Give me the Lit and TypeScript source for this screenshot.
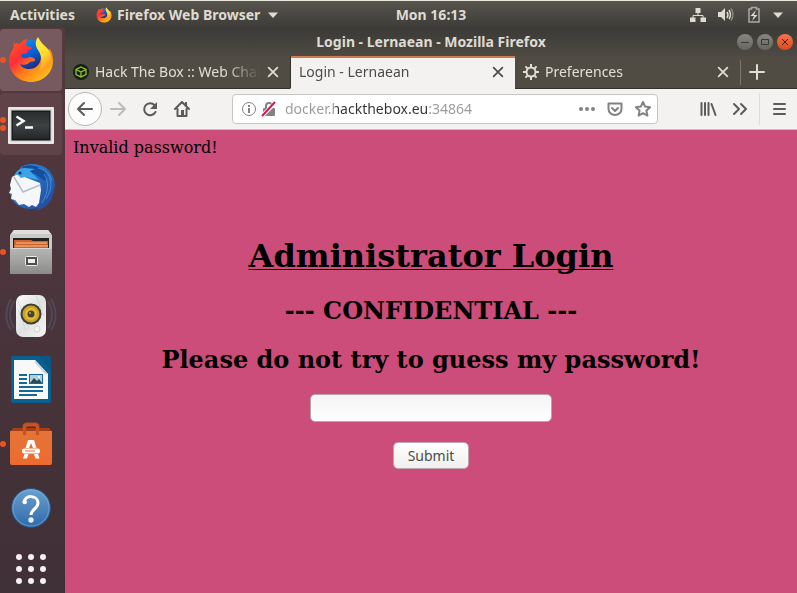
import { LitElement, html, css, svg, nothing, SVGTemplateResult } from "lit";
import { customElement, property } from "lit/decorators.js";

const firefox = (id: string) => svg`
  <defs>
    <linearGradient id="${id}-fire" x1="0.1" y1="0" x2="0.9" y2="0.9">
      <stop offset="0" stop-color="#ff5a1f"/><stop offset="0.35" stop-color="#ff2d3c"/>
      <stop offset="0.6" stop-color="#ff7a1a"/><stop offset="1" stop-color="#ffc21c"/>
    </linearGradient>
    <linearGradient id="${id}-tail" x1="0" y1="0" x2="0.4" y2="1">
      <stop offset="0" stop-color="#fff04a"/><stop offset="0.6" stop-color="#ffdc2e"/><stop offset="1" stop-color="#ff9a1f"/>
    </linearGradient>
    <linearGradient id="${id}-globe" x1="0" y1="0" x2="0.5" y2="1">
      <stop offset="0" stop-color="#0aa0ee"/><stop offset="0.5" stop-color="#0a5fd6"/><stop offset="1" stop-color="#20206e"/>
    </linearGradient>
  </defs>
  <circle cx="31" cy="28" r="17" fill="url(#${id}-globe)"/>
  <path fill="url(#${id}-fire)" d="M14 12c-1 3 0 5 0 6-3 4-5 9-5 14 0 12 10 21 22 21s22-9 22-21c0-4-1-9-3-12l-9 4c1 10-4 16-12 16-4 0-8-2-9-5 5 2 8 0 10-2 2-1 5 0 5-2 0-2-3-3-5-3-3 0-4 2-7 1-2-1-3-3-1-4 2-1 4 0 5-1 0-3 4-3 5-5-1-2-5-1-6-3 0-3 1-4 2-6-4 0-7 3-8 5-2-1-4-1-5 0-1-1-1-2-1-3z"/>
  <path fill="url(#${id}-tail)" d="M38 8c-3 4-3 9 0 13 4 6 5 14 0 22 9-1 13-8 13-15 0-9-9-11-13-20z"/>`;

const terminal = svg`
  <defs><linearGradient id="term" x1="0" y1="0" x2="0" y2="1"><stop offset="0" stop-color="#292c2d"/><stop offset="0.5" stop-color="#3d4142"/><stop offset="1" stop-color="#222525"/></linearGradient></defs>
  <rect x="8" y="14" width="46" height="37" rx="1" fill="#d8d8d6"/>
  <rect x="9" y="15" width="44" height="35" fill="none" stroke="#f6f6f5"/>
  <rect x="12" y="18" width="38" height="29" fill="url(#term)" stroke="#090a0a"/>
  <path d="M16.500 23.500l7 4.500-7 4.500" fill="none" stroke="#fff" stroke-width="2.500"/><path d="M25 34.500h8" stroke="#fff" stroke-width="2.500"/>`;

const mail = svg`
  <defs><linearGradient id="bird" x1="0" y1="0" x2="1" y2="1"><stop offset="0" stop-color="#3196df"/><stop offset="0.5" stop-color="#256bc0"/><stop offset="1" stop-color="#26418f"/></linearGradient></defs>
  <path fill="url(#bird)" d="M21 10c5-3 12-4 18-2 10 2 16 11 16 21l-3 12c-2 6-9 11-16 13l3-3c-8 2-15 1-20-2-6-3-9-9-9-15z"/>
  <path fill="#164e9e" d="M22 10c6-3 14-2 20 2 5 4 6 9 3 12l-10-7-13-2z"/>
  <path fill="#f5f7fa" d="M12 20l5-3 23 9 1 7-2 13-3 4-4-2-3 2-5-3-5 1-4-5-4-1 1-5-3-1 2-4-1-4z"/>
  <path d="M14 20l9 15 17-7" fill="none" stroke="#b6bdc7" stroke-width="1.500"/>
  <path fill="#3ea4e8" d="M14 19c2-5 6-8 11-8l10 1-5 2 9 9-14-3-4 1-3-3c-2 0-3 0-4 1z"/>
  <circle cx="20" cy="16" r="1.600" fill="#163267"/>
  <path fill="none" stroke="#4ea0e2" stroke-width="1" opacity="0.7" d="M44 17c5 8 5 17-2 29M48 17c5 9 3 17-2 25M38 11c8 2 12 6 14 13"/>`;

const files = svg`
  <defs><linearGradient id="drawer" x1="0" y1="0" x2="0" y2="1"><stop offset="0" stop-color="#b7b7b5"/><stop offset="1" stop-color="#8b8c8a"/></linearGradient></defs>
  <path fill="#c9c9c7" d="M14 9h34l4 5v37a2 2 0 0 1-2 2H12a2 2 0 0 1-2-2V14z"/>
  <path fill="#dededc" d="M14 9h34l3 4H11z"/>
  <rect x="13" y="17" width="36" height="10" fill="#222"/>
  <path fill="#ce622d" d="M14 19h17l2 1h15v7H14z"/><path stroke="#ffc18b" d="M16 22h31M15 25h33"/>
  <path fill="url(#drawer)" d="M10 27h42v24a2 2 0 0 1-2 2H12a2 2 0 0 1-2-2z"/>
  <path stroke="#d5d5d3" d="M11 27.500h40"/>
  <rect x="25.500" y="35.500" width="12" height="9" rx="1" fill="#4d4e4d" stroke="#ececea"/><rect x="28" y="38" width="7" height="4" fill="#eee"/>`;

const speaker = svg`
  <defs><linearGradient id="cabinet" x1="0" y1="0" x2="1" y2="1"><stop offset="0" stop-color="#fafafa"/><stop offset="0.5" stop-color="#dfe2e2"/><stop offset="1" stop-color="#f6f5f4"/></linearGradient></defs>
  <g fill="none" stroke="#586178" stroke-width="2" opacity="0.45"><path d="M14 16c-5 9-5 19 0 27M11 14c-6 11-6 22 0 31M48 16c5 9 5 19 0 27M51 14c6 11 6 22 0 31"/></g>
  <rect x="16" y="10" width="30" height="42" rx="7" fill="url(#cabinet)"/>
  <path d="M18 16l11 28M18 24l8 22M36 11l8 20" stroke="#c2ced0" opacity="0.6"/>
  <circle cx="31" cy="29" r="10.500" fill="#3f3d35"/><circle cx="31" cy="29" r="8.500" fill="#c9a423"/>
  <circle cx="31" cy="29" r="6" fill="#dfbc35"/><circle cx="31" cy="29" r="3.500" fill="#4b4327"/><circle cx="30" cy="28" r="1" fill="#baa46a"/>
  <circle cx="37" cy="44" r="3" fill="#f4f4f4" stroke="#d3d3d3"/>`;

const writer = svg`
  <path fill="#09608f" d="M12 7h28l11 13v32a2 2 0 0 1-2 2H13a2 2 0 0 1-2-2V9z"/>
  <path fill="#0b5684" d="M39 7h11l1 1v14z"/>
  <path fill="#f7f8f8" d="M14 11h21l13 14v25H14z"/><path fill="#cbd8df" d="M35 11v3l10 11h3z"/>
  <path stroke="#176894" stroke-width="2" d="M19 26h8M19 30h8M19 34h8M19 38h24M19 42h24M19 46h18"/>
  <rect x="29.500" y="25.500" width="13" height="9" fill="#aed0df" stroke="#176894"/><path fill="#244c57" d="M30 34l4-5 3 3 2-2 3 4z"/><circle cx="39" cy="28" r="1" fill="#fff"/>`;

const software = svg`
  <defs><linearGradient id="bag" x1="0" y1="0" x2="0" y2="1"><stop offset="0" stop-color="#e47438"/><stop offset="1" stop-color="#ee6b2f"/></linearGradient></defs>
  <path fill="#a73f16" d="M13 15h36l3 4H10z"/>
  <path fill="none" stroke="#b84a1e" stroke-width="3" d="M24 17v-3q0-3 3-3h8q3 0 3 3v3"/>
  <path fill="url(#bag)" d="M10 18h42v32a2 2 0 0 1-2 2H12a2 2 0 0 1-2-2z"/>
  <path fill="none" stroke="#c9531f" stroke-width="3" d="M24.500 22v-7q0-3 3-3h7q3 0 3 3v7"/>
  <path fill="#fff" d="M28 27h6l2.500 8h-3.500l-2-5-2 5h-3.500zM24.500 41h4l-1.500 4.500h-4zM34 41h4l1.500 4.500h-4z"/>
  <rect x="22" y="35.500" width="18" height="5" rx="2" fill="#fff"/><path stroke="#e96d32" d="M25 38h10"/>`;

const help = svg`
  <defs><linearGradient id="help" x1="0" y1="0" x2="0" y2="1"><stop offset="0" stop-color="#6ba1cf"/><stop offset="1" stop-color="#2f6aa9"/></linearGradient></defs>
  <circle cx="31" cy="31" r="19.500" fill="url(#help)" stroke="#24507f"/>
  <circle cx="31" cy="31" r="18" fill="none" stroke="#83b0d8" opacity="0.6"/>
  <path d="M24 26c0-9 14-8 14 0 0 6-7 6-7 12" fill="none" stroke="#fff" stroke-width="3"/><circle cx="24.800" cy="25" r="2.200" fill="#fff"/><circle cx="31" cy="43" r="2.700" fill="#e4edf6"/>`;

const apps = svg`<g fill="#f4f0f1">${[16, 28, 40].map((y) => [19, 31, 43].map((x) => svg`<circle cx="${x}" cy="${y}" r="3"/>`))}</g>`;

const line = (d: string, width = 2) =>
  svg`<path d="${d}" fill="none" stroke="currentColor" stroke-width="${width}" stroke-linecap="round" stroke-linejoin="round"/>`;

const glyphs: Record<string, SVGTemplateResult> = {
  back: line("M15 8H1M7 2L1 8l6 6"),
  forward: line("M1 8h14M9 2l6 6-6 6"),
  reload: svg`${line("M13.500 11A6 6 0 1 1 12.500 4")}<path fill="currentColor" d="M15 1v7H8z"/>`,
  home: svg`${line("M1 8l7-7 7 7M3.500 8v7h9V8")}<path fill="currentColor" d="M7 9h3v6H7zM11 1h2v4h-2z"/>`,
  info: svg`<circle cx="8" cy="8" r="6.500" fill="none" stroke="currentColor"/><path stroke="currentColor" stroke-width="2" d="M8 7v5M8 4v2"/>`,
  lock: svg`<path d="M5 8V5a3 3 0 0 1 6 0v3" fill="none" stroke="currentColor" stroke-width="2"/><rect x="2" y="7" width="12" height="8" rx="1" fill="currentColor"/><path stroke="#fff" stroke-width="4" d="M1 15L15 1"/><path stroke="#d7174b" stroke-width="2" d="M1 15L14 1"/>`,
  dots: svg`<g fill="currentColor"><circle cx="2" cy="8" r="2"/><circle cx="8" cy="8" r="2"/><circle cx="14" cy="8" r="2"/></g>`,
  pocket: line("M1.500 2.500h13V8a6.500 6 0 0 1-13 0zM5 7l3 3 3-3"),
  star: line("M8 1l2.100 4.600 5 .6-3.700 3.400 1 5L8 12.200l-4.400 2.400 1-5L.900 6.200l5-.6z"),
  library: line("M1.500 2v12M5 2v12M8.500 2v12M11.500 3l4 11"),
  more: line("M2 3l5 5-5 5M9 3l5 5-5 5"),
  menu: line("M3 3h11M3 8h11M3 13h11"),
  close: line("M3 3l10 10M13 3L3 13"),
  plus: line("M8 1v14M1 8h14"),
  cube: svg`<circle cx="8" cy="8" r="8" fill="#15200f"/><path d="M8 3l5 2.500v5L8 13l-5-2.500v-5zM3 5.500L8 8l5-2.500M8 8v5" fill="none" stroke="#91c431" stroke-width="1.300"/>`,
  gear: svg`<circle cx="8" cy="8" r="4.500" fill="none" stroke="currentColor" stroke-width="2"/><path stroke="currentColor" stroke-width="2" d="M8 0v3M8 13v3M0 8h3M13 8h3M2.400 2.400l2 2M11.600 11.600l2 2M2.400 13.600l2-2M11.600 4.400l2-2"/>`,
  network: svg`<path d="M5.500 1h5v5h-5zM0 10.500h5.500V15H0zM10.500 10.500H16V15h-5.500z" fill="currentColor"/><path d="M8 6v3M3 11V8.500h10V11" fill="none" stroke="currentColor"/>`,
  volume: svg`<path fill="currentColor" d="M0 5h3l4-4v13l-4-4H0z"/><path d="M9 5q2 3 0 6M11 3q3 5 0 9" fill="none" stroke="currentColor" stroke-width="1.500"/><path d="M13 1.500q4 6 0 12" fill="none" stroke="#8b8983" stroke-width="1.500"/>`,
  battery: svg`<path d="M5.500 2V.500h5V2H13v13H3V2z" fill="none" stroke="#aaa9a2" stroke-width="1.500"/><path fill="currentColor" d="M10 3L4.500 9H8l-2 5 5.500-6H8z"/>`,
  caret: svg`<path d="M3 5.500h10L8 11z" fill="currentColor"/>`,
  firefox: svg`<g transform="translate(-2.500 -2.500) scale(.34)">${firefox("small")}</g>`,
};

@customElement("ui-glyph")
export class UiGlyph extends LitElement {
  @property() name = "";
  static styles = css`
    :host { display: block; flex: none; width: 16px; height: 16px; }
    svg { display: block; width: 100%; height: 100%; overflow: visible; }
  `;
  render() {
    return html`<svg viewBox="0 0 16 16" aria-hidden="true">${glyphs[this.name]}</svg>`;
  }
}

interface Launcher { label: string; art: SVGTemplateResult; windows: number; tone?: string }

const launchers: Launcher[] = [
  { label: "Firefox", art: firefox("large"), windows: 1, tone: "focused" },
  { label: "Terminal", art: terminal, windows: 2, tone: "open" },
  { label: "Thunderbird", art: mail, windows: 0 },
  { label: "Files", art: files, windows: 1 },
  { label: "Rhythmbox", art: speaker, windows: 0 },
  { label: "Writer", art: writer, windows: 0 },
  { label: "Software", art: software, windows: 1 },
  { label: "Help", art: help, windows: 0 },
  { label: "Show Applications", art: apps, windows: 0 },
];

@customElement("app-dock")
export class AppDock extends LitElement {
  static styles = css`
    :host { display: block; background: linear-gradient(#55393f, #4a343b 50%, #3f2f36); }
    .dock { display: flex; flex-direction: column; gap: 2px; padding: 1px 3px 0 0; }
    .item { position: relative; display: block; width: 100%; height: 62px; padding: 0; border: 0; border-radius: 4px; background: none; }
    .focused { background: #765a60; }
    .open { background: #604349; }
    .art { display: block; width: 62px; height: 62px; }
    .pips { position: absolute; inset: 0 auto 0 0; display: flex; flex-direction: column; justify-content: center; gap: 2px; }
    .pip { width: 6px; height: 6px; border-radius: 50%; background: #e95420; }
  `;
  render() {
    return html`<nav class="dock" aria-label="Dock">
      ${launchers.map((l) => html`<button class="item ${l.tone ?? ""}" aria-label=${l.label}>
        <svg class="art" viewBox="0 0 62 62" aria-hidden="true">${l.art}</svg>
        <span class="pips">${Array.from({ length: l.windows }, () => html`<span class="pip"></span>`)}</span>
      </button>`)}
    </nav>`;
  }
}

const tabs = [
  { title: "Hack The Box :: Web Chal", icon: "cube", active: false },
  { title: "Login - Lernaean", icon: "", active: true },
  { title: "Preferences", icon: "gear", active: false },
];

@customElement("browser-window")
export class BrowserWindow extends LitElement {
  static styles = css`
    :host { display: flex; flex-direction: column; min-width: 0; font: 14px/20px "Noto Sans", sans-serif; }
    * { box-sizing: border-box; }
    button { padding: 0; border: 0; background: none; color: inherit; font: inherit; }
    .title { display: grid; grid-template-columns: 64px 1fr 64px; align-items: center; height: 28px; background: linear-gradient(#3b3a36, #4e4a43); color: #dfdbd2; }
    .title-text { grid-column: 2; text-align: center; font-weight: 700; white-space: nowrap; }
    .controls { display: flex; justify-content: flex-end; gap: 4px; padding-right: 4px; }
    .control { display: grid; place-items: center; width: 16px; height: 16px; border-radius: 50%; background: linear-gradient(#88867f, #67655f); color: #393834; }
    .control.quit { background: linear-gradient(#f5744a, #dc4a1c); color: #571d0c; }
    .control svg { width: 10px; height: 10px; }
    .strip { display: flex; height: 33px; background: #504c44; color: #e2ded4; }
    .tab { display: flex; align-items: center; gap: 6px; flex: 0 1 225px; min-width: 0; padding: 0 10px 0 8px; border-bottom: 1px solid #34322d; }
    .tab.active { border-bottom-color: #f3f2f0; border-left: 1px solid #34322d; box-shadow: inset 0 2px #d07b50; background: #f3f2f0; color: #4c4c4c; }
    .tab-text { flex: 1; min-width: 0; overflow: hidden; white-space: nowrap; mask-image: linear-gradient(to left, transparent, #000 36px); }
    .tab-close ui-glyph { width: 14px; height: 14px; }
    .strip-end { display: flex; flex: 1; align-items: center; border-bottom: 1px solid #34322d; }
    .divider { width: 1px; height: 25px; background: #7b776d; }
    .new-tab { margin-left: 8px; }
    .bar { display: flex; align-items: center; height: 41px; padding: 0 2px 0 3px; border-bottom: 1px solid #d9b3c0; background: #f3f2f0; color: #5b5b5b; }
    .tool { display: grid; place-items: center; width: 32px; height: 32px; }
    .tool.round { width: 34px; height: 34px; border: 1px solid #b8b7b5; border-radius: 50%; background: #fcfcfc; }
    .tool:disabled { color: #bcbbb9; }
    .address { display: flex; align-items: center; flex: 1; gap: 12px; min-width: 0; height: 30px; margin: 0 34px; padding: 0 6px 0 8px; border: 1px solid #c6c5c3; border-radius: 4px; background: #fff; color: #828282; }
    .site { display: flex; gap: 4px; }
    .url { flex: 1; min-width: 0; padding: 0; margin-left: -4px; border: 0; outline: 0; font: inherit; color: #333; background: linear-gradient(90deg, #999 50px, #333 50px 143px, #999 143px); -webkit-background-clip: text; background-clip: text; -webkit-text-fill-color: transparent; }
    .bar-divider { width: 1px; height: 32px; margin: 0 3px; background: #dddcda; }
    .page { flex: 1; padding: 8px; background: #cc4d79; color: #000; font: 16px/19px "DejaVu Serif", serif; }
    .notice { margin: 0; }
    .login { text-align: center; }
    h1 { margin: 79px 0 20px; font-size: 32px; line-height: 40px; text-decoration: underline 1px; text-underline-offset: 2px; text-decoration-skip-ink: none; }
    h2 { margin: 20px 0; font-size: 24px; line-height: 29px; }
    .password { display: block; width: 242px; max-width: 100%; height: 28px; margin: 0 auto 20px; padding: 4px 8px; border: 1px solid #b8a4ab; border-radius: 5px; background: linear-gradient(#f4f4f4, #fff); }
    .submit { width: 76px; height: 27px; border: 1px solid #c0a5af; border-radius: 5px; background: linear-gradient(#fff, #f0efee); color: #4c4c4c; font: 14px/20px "Noto Sans", sans-serif; }
  `;

  private tool(name: string, label: string, extra = "", disabled = false) {
    return html`<button class="tool ${extra}" aria-label=${label} ?disabled=${disabled}><ui-glyph name=${name}></ui-glyph></button>`;
  }

  private control(label: string, d: string, extra = "") {
    return html`<button class="control ${extra}" aria-label=${label}><svg viewBox="0 0 10 10"><path d=${d} fill="none" stroke="currentColor"/></svg></button>`;
  }

  render() {
    return html`
      <header class="title">
        <span class="title-text">Login - Lernaean - Mozilla Firefox</span>
        <div class="controls">
          ${this.control("Minimize", "M1 5.500h8")}
          ${this.control("Maximize", "M1.500 2.500h7v5h-7z")}
          ${this.control("Close window", "M2 2l6 6M8 2L2 8", "quit")}
        </div>
      </header>
      <div class="strip">
        ${tabs.map((t) => html`<div class="tab ${t.active ? "active" : ""}">
          ${t.icon ? html`<ui-glyph name=${t.icon}></ui-glyph>` : nothing}
          <span class="tab-text">${t.title}</span>
          <button class="tab-close" aria-label="Close tab"><ui-glyph name="close"></ui-glyph></button>
        </div>`)}
        <div class="strip-end"><span class="divider"></span><button class="new-tab" aria-label="New tab"><ui-glyph name="plus"></ui-glyph></button></div>
      </div>
      <div class="bar">
        ${this.tool("back", "Back", "round")}
        ${this.tool("forward", "Forward", "", true)}
        ${this.tool("reload", "Reload")}
        ${this.tool("home", "Home")}
        <div class="address">
          <span class="site"><ui-glyph name="info"></ui-glyph><ui-glyph name="lock"></ui-glyph></span>
          <input class="url" aria-label="Address" value="docker.hackthebox.eu:34864" />
          <button aria-label="Page actions"><ui-glyph name="dots"></ui-glyph></button>
          <button aria-label="Save to Pocket"><ui-glyph name="pocket"></ui-glyph></button>
          <button aria-label="Bookmark"><ui-glyph name="star"></ui-glyph></button>
        </div>
        ${this.tool("library", "Library")}
        ${this.tool("more", "More tools")}
        <span class="bar-divider"></span>
        ${this.tool("menu", "Menu")}
      </div>
      <main class="page">
        <p class="notice">Invalid password!</p>
        <form class="login" @submit=${(e: Event) => e.preventDefault()}>
          <h1>Administrator Login</h1>
          <h2>--- CONFIDENTIAL ---</h2>
          <h2>Please do not try to guess my password!</h2>
          <input class="password" type="password" aria-label="Password" />
          <button class="submit" type="submit">Submit</button>
        </form>
      </main>`;
  }
}

@customElement("app-root")
export class AppRoot extends LitElement {
  static styles = css`
    :host { display: flex; flex-direction: column; min-height: 100vh; font: 700 14px/20px "Noto Sans", sans-serif; }
    .panel { display: flex; align-items: center; box-sizing: border-box; height: 28px; padding: 0 11px 0 10px; border-top: 1px solid #e9e9df; background: linear-gradient(#56544c, #3d3c38); color: #dfdbd2; }
    .group { display: flex; align-items: center; flex: 1 1 66px; gap: 21px; }
    .status { flex-basis: 0; justify-content: flex-end; }
    .menu { display: flex; align-items: center; gap: 5px; padding: 0; border: 0; background: none; color: inherit; font: inherit; white-space: nowrap; }
    .tray { gap: 12px; }
    .tray ui-glyph:last-child { margin-left: -4px; }
    .desktop { display: grid; grid-template-columns: 65px minmax(0, 1fr); flex: 1; }
  `;
  render() {
    return html`
      <header class="panel">
        <div class="group">
          <button class="menu">Activities</button>
          <button class="menu"><ui-glyph name="firefox"></ui-glyph>Firefox Web Browser<ui-glyph name="caret"></ui-glyph></button>
        </div>
        <button class="menu">Mon 16:13</button>
        <div class="group status">
          <button class="menu tray" aria-label="System menu">
            ${["network", "volume", "battery", "caret"].map((n) => html`<ui-glyph name=${n}></ui-glyph>`)}
          </button>
        </div>
      </header>
      <div class="desktop"><app-dock></app-dock><browser-window></browser-window></div>`;
  }
}
